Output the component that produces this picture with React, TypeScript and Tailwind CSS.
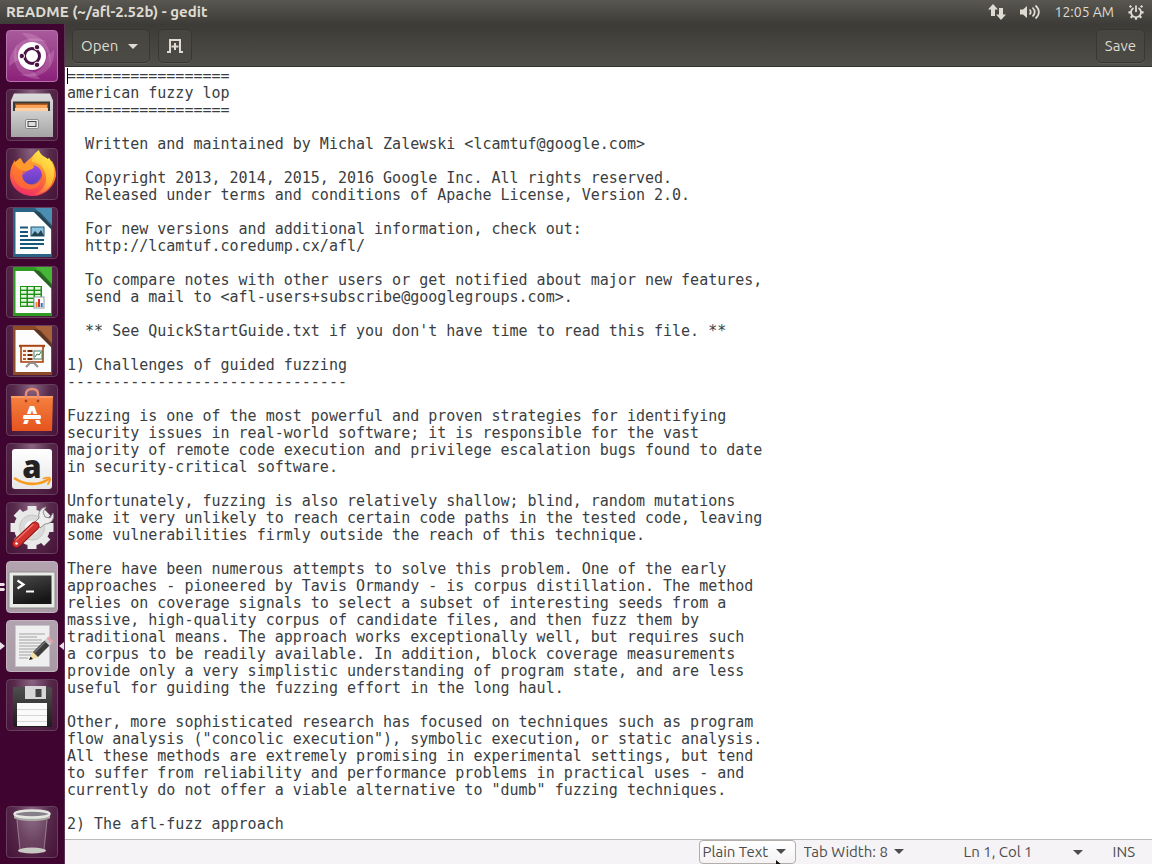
import type { ReactNode } from 'react';

const README = `==================
american fuzzy lop
==================

  Written and maintained by Michal Zalewski <lcamtuf@google.com>

  Copyright 2013, 2014, 2015, 2016 Google Inc. All rights reserved.
  Released under terms and conditions of Apache License, Version 2.0.

  For new versions and additional information, check out:
  http://lcamtuf.coredump.cx/afl/

  To compare notes with other users or get notified about major new features,
  send a mail to <afl-users+subscribe@googlegroups.com>.

  ** See QuickStartGuide.txt if you don't have time to read this file. **

1) Challenges of guided fuzzing
-------------------------------

Fuzzing is one of the most powerful and proven strategies for identifying
security issues in real-world software; it is responsible for the vast
majority of remote code execution and privilege escalation bugs found to date
in security-critical software.

Unfortunately, fuzzing is also relatively shallow; blind, random mutations
make it very unlikely to reach certain code paths in the tested code, leaving
some vulnerabilities firmly outside the reach of this technique.

There have been numerous attempts to solve this problem. One of the early
approaches - pioneered by Tavis Ormandy - is corpus distillation. The method
relies on coverage signals to select a subset of interesting seeds from a
massive, high-quality corpus of candidate files, and then fuzz them by
traditional means. The approach works exceptionally well, but requires such
a corpus to be readily available. In addition, block coverage measurements
provide only a very simplistic understanding of program state, and are less
useful for guiding the fuzzing effort in the long haul.

Other, more sophisticated research has focused on techniques such as program
flow analysis ("concolic execution"), symbolic execution, or static analysis.
All these methods are extremely promising in experimental settings, but tend
to suffer from reliability and performance problems in practical uses - and
currently do not offer a viable alternative to "dumb" fuzzing techniques.

2) The afl-fuzz approach
`;

/* ---------- launcher icons, all drawn on a 52x52 tile ---------- */

function UbuntuIcon() {
  return (
    <>
      <g fill="#f0c4ea" fillOpacity="0.22">
        <path d="M3 36C4 12 24 2 42 12 26 8 12 16 12 30z" />
        <path d="M16 3C36 2 50 20 43 40 46 24 38 12 24 11z" />
        <path d="M48 20C50 40 32 52 12 44 28 47 40 38 41 26z" />
        <path d="M34 49C14 50 2 32 11 14 8 30 16 40 28 42z" />
      </g>
      <circle cx="26" cy="26" r="14" fill="#fff" />
      <circle cx="26" cy="26" r="7.5" fill="none" stroke="#4a1244" strokeWidth="3" />
      <g fill="#4a1244" stroke="#fff" strokeWidth="1">
        <circle cx="15.8" cy="26" r="2.7" />
        <circle cx="31" cy="17.2" r="2.7" />
        <circle cx="31" cy="34.8" r="2.7" />
      </g>
    </>
  );
}

function FilesIcon() {
  return (
    <>
      <path d="M8 4.5h36l3 7v36H5v-36z" fill="url(#silver)" />
      <path d="M7 12.5h37v10H7z" fill="#3c3a38" />
      <path d="M9 14.5h33v8H9z" fill="#b65a1c" />
      <path d="M10 16h31v6H10z" fill="#f7a35c" />
      <path d="M9 19h33v4H9z" fill="#fbd0a4" />
      <path d="M5 22h42v26H5z" fill="url(#drawer)" />
      <rect x="19.5" y="30.5" width="13" height="9" rx="1.5" fill="#efefef" stroke="#8b8b8b" />
      <rect x="22" y="32.5" width="8" height="5" fill="#ddd" stroke="#444" />
    </>
  );
}

function FirefoxIcon() {
  return (
    <>
      <path
        d="M31 4c0 3-1 5-3 7 4 1 8 2 10 5l8-3c3 5 4 10 4 15-2 12-12 20-23 20C14 48 4 39 4 27c0-6 2-11 5-15v4l5-5c2 1 2 3 4 5z"
        fill="url(#fox)"
      />
      <path d="M33 2c1 5 5 6 9 9 0 0 1-2 1-1 3 4 6 10 5 17-1 11-9 19-20 20 8-4 13-11 12-18-1-8-5-14-14-15 0-5 2-9 7-12z" fill="url(#tail)" />
      <circle cx="26" cy="27" r="10" fill="url(#globe)" />
      <path d="M9 13c0 1 0 2 1 3l4-5c2 1 2 3 4 5 4 0 7 1 9 3 0 2-3 3-6 4-2 3-4 3-5 5 1 6 6 9 11 8 4-1 7-4 8-8 1 10-7 15-15 13C11 39 7 32 7 24c0-5 1-8 2-11z" fill="#ff7a2c" fillOpacity="0.6" />
      <path d="M8 15l6-5c2 1 2 4 4 6 4-1 8 0 10 2 0 3-3 3-7 5-4 0-10-1-13-8z" fill="#ff9a2b" />
    </>
  );
}

function DocIcon({ color, fold, children }: { color: string; fold: string; children: ReactNode }) {
  return (
    <>
      <path d="M7 1h39v49H7z" fill={color} />
      <path d="M9.5 5H28l17 17v25H9.5z" fill="#fdfdfd" />
      <path d="M29 1h17v19z" fill={fold} />
      <path d="M27 4l7 1 12 13v5z" fill="#1d1d1d" fillOpacity="0.45" />
      {children}
    </>
  );
}

function WriterIcon() {
  return (
    <DocIcon color="#2a6384" fold="#4a8fb3">
      <path d="M14 20.5h8M14 25h8M14 29h8M14 33h24M14 37h24M14 41h18" stroke="#155877" strokeWidth="2" />
      <rect x="25" y="20" width="13" height="9" fill="#8fc3dd" stroke="#155877" />
      <path d="M25 29l4-5 3 3 3-4 3 6z" fill="#24454f" />
    </DocIcon>
  );
}

function CalcIcon() {
  return (
    <DocIcon color="#2f9a24" fold="#45b636">
      <rect x="14" y="20" width="22" height="21" fill="#1d9213" />
      <g fill="#e7f7e3">
        {[21, 25, 29, 33, 37].map((y) => (
          <g key={y}>
            <rect x="15" y={y} width="5.5" height="2.6" />
            <rect x="22" y={y} width="5.5" height="2.6" />
            <rect x="29" y={y} width="5.5" height="2.6" />
          </g>
        ))}
      </g>
      <rect x="28" y="31" width="10" height="11" fill="#fff" stroke="#8b9aa5" />
      <path d="M30.5 41v-5" stroke="#ef8b2f" strokeWidth="2" />
      <path d="M33 41v-8" stroke="#cf2e2e" strokeWidth="2" />
      <path d="M35.7 41v-4" stroke="#2d76b5" strokeWidth="2" />
    </DocIcon>
  );
}

function ImpressIcon() {
  return (
    <DocIcon color="#8f4a26" fold="#a8623a">
      <path d="M13 21h26" stroke="#a94612" strokeWidth="2.4" />
      <rect x="15" y="21" width="22" height="16" fill="#fdf4ee" stroke="#a94612" strokeWidth="1.6" />
      <path d="M17 26h3M17 30h3M17 34h3" stroke="#c3571d" strokeWidth="2" />
      <path d="M21.5 26h5M21.5 30h5M21.5 34h5" stroke="#6d2c0c" strokeWidth="2" />
      <rect x="28" y="26" width="8" height="8" fill="#fff" stroke="#40806a" />
      <path d="M29 32l2-3 2 1 2-3" fill="none" stroke="#2c7a3e" />
      <path d="M20 42l4-4h4l4 4" fill="none" stroke="#8e8e8e" strokeWidth="2" />
    </DocIcon>
  );
}

function SoftwareIcon() {
  return (
    <>
      <path d="M5 12h42l-1 35H6z" fill="url(#bag)" />
      <path d="M5 12h42v2H5z" fill="#fb9a63" />
      <path d="M20 18v-8c0-3 2-5 6-5s6 2 6 5v8" fill="none" stroke="#e98d72" strokeWidth="2.4" />
      <circle cx="20" cy="17" r="1.4" fill="#b23c12" />
      <circle cx="32" cy="17" r="1.4" fill="#b23c12" />
      <text x="26" y="40" textAnchor="middle" fontFamily="Lato" fontWeight="800" fontSize="24" fill="#fff">A</text>
      <path d="M15.5 33h20" stroke="#ed6a30" strokeWidth="6" />
      <rect x="17" y="31" width="18" height="4" rx="1.5" fill="#fff" />
    </>
  );
}

function AmazonIcon() {
  return (
    <>
      <rect x="6" y="6" width="40" height="40" rx="3" fill="url(#paper)" />
      <text x="26" y="35" textAnchor="middle" fontFamily="Open Sans" fontWeight="800" fontSize="31" fill="#222">a</text>
      <path d="M9 35.5c10 7 24 7 33 1" fill="none" stroke="#f79a1e" strokeWidth="2.6" strokeLinecap="round" />
      <path d="M37.5 35.5c3-1 6-1 6.500-.3.4.8-.6 3.800-2 5.800" fill="none" stroke="#f79a1e" strokeWidth="1.800" strokeLinecap="round" />
    </>
  );
}

function SettingsIcon() {
  return (
    <>
      <g stroke="#e9e9e9" strokeWidth="9">
        <path d="M26 4v43M4.5 25.5h43M10.8 10.3l30.4 30.4M41.2 10.3L10.8 40.7" />
      </g>
      <circle cx="26" cy="25.5" r="18" fill="#e9e9e9" />
      <circle cx="26" cy="25.5" r="12.500" fill="#dadada" stroke="#c6c6c6" />
      <circle cx="26" cy="25.5" r="7" fill="#f3f3f3" />
      <path
        d="M29 20l4-4c-1-5 1-10 7-11l-3 5 2 5 5 1 3-5c2 6-2 11-8 11l-5 4z"
        fill="#eee"
        stroke="#8f8f8f"
        strokeWidth="1"
      />
      <path d="M10.5 41.5L29 24" stroke="#8e100f" strokeWidth="9" strokeLinecap="round" />
      <path d="M10.5 41.5L29 24" stroke="#d03330" strokeWidth="7" strokeLinecap="round" />
      <path d="M10 38.5L27 22.5" stroke="#f2706a" strokeWidth="1.5" strokeLinecap="round" />
      <circle cx="10.5" cy="41.5" r="1.3" fill="#fff" />
    </>
  );
}

function TerminalIcon() {
  return (
    <>
      <rect x="3" y="11" width="46" height="36" rx="1" fill="#e9ebe8" stroke="#8c8c8c" />
      <rect x="7" y="14.5" width="38.5" height="28.5" fill="url(#screen)" />
      <path d="M11.5 19.5l6 4-6 4" fill="none" stroke="#fff" strokeWidth="2.2" />
      <path d="M20 30.5h8" stroke="#fff" strokeWidth="2" />
    </>
  );
}

function GeditIcon() {
  return (
    <>
      <path d="M9.5 5.5h34v41h-34z" fill="#efefef" stroke="#c9c9c9" />
      <path
        d="M13 14h26M13 17h18M13 20h23M13 23h25M13 26h22M13 29h20M13 32h15M13 35h12M13 38h9"
        stroke="#a3a3a3"
        strokeWidth="1"
      />
      <path d="M23 40l4-9 6 6z" fill="#f2dfa2" />
      <path d="M23 40l1.5-3.5 2.500 2.500z" fill="#111" />
      <path d="M29.5 34.5L41 23" stroke="#3d3d3d" strokeWidth="7" />
      <path d="M28.5 32.500L39.5 21.5" stroke="#777" strokeWidth="1.5" />
      <path d="M41 23l2-2" stroke="#ccc" strokeWidth="7" />
      <path d="M43 21l2-2" stroke="#e7a0ad" strokeWidth="7" />
    </>
  );
}

function FloppyIcon() {
  return (
    <>
      <path d="M7 8h37l2 2v38H9l-2-2z" fill="url(#floppy)" />
      <rect x="19" y="7" width="21" height="13" fill="#d7d7d7" />
      <rect x="29.5" y="10" width="6" height="8" fill="#444" />
      <rect x="11" y="24" width="30" height="23" fill="#fafafa" />
      <path d="M11 30.5h30M11 36.5h30M11 42.5h30" stroke="#d6d6d6" />
    </>
  );
}

function TrashIcon() {
  return (
    <>
      <path d="M10 10h32l-4 35c-5 3-19 3-24 0z" fill="#fff" fillOpacity="0.12" />
      <path d="M11 14l3 30M41 14l-3 30" stroke="#ddd" strokeOpacity="0.4" />
      <ellipse cx="26" cy="44.5" rx="14" ry="3" fill="#c9c9c4" />
      <path d="M8 8v4c4 4 32 4 36 0V8z" fill="#a9aaa6" />
      <ellipse cx="26" cy="8" rx="17.500" ry="3.500" fill="#85808a" stroke="#e6e6e2" strokeWidth="2.4" />
    </>
  );
}

function SharedGradients() {
  return (
    <svg className="absolute size-0" aria-hidden="true">
      <defs>
        <linearGradient id="silver" x2="0" y2="1">
          <stop stopColor="#dcdcdc" />
          <stop offset="1" stopColor="#aaa" />
        </linearGradient>
        <linearGradient id="drawer" x2="0" y2="1">
          <stop stopColor="#cfcfcf" />
          <stop offset="1" stopColor="#a4a4a4" />
        </linearGradient>
        <linearGradient id="fox" x1="0.7" x2="0.4" y2="1">
          <stop stopColor="#ffc83a" />
          <stop offset="0.5" stopColor="#ff7a2f" />
          <stop offset="1" stopColor="#f02f66" />
        </linearGradient>
        <linearGradient id="tail" x1="0.7" x2="0.3" y2="1">
          <stop stopColor="#fff04f" />
          <stop offset="0.6" stopColor="#ffb634" />
          <stop offset="1" stopColor="#ff5a45" />
        </linearGradient>
        <linearGradient id="globe" x2="0" y2="1">
          <stop stopColor="#9a4be0" />
          <stop offset="1" stopColor="#5a3fc0" />
        </linearGradient>
        <linearGradient id="bag" x2="0" y2="1">
          <stop stopColor="#f4813f" />
          <stop offset="1" stopColor="#e6531f" />
        </linearGradient>
        <linearGradient id="paper" x2="0" y2="1">
          <stop stopColor="#fff" />
          <stop offset="1" stopColor="#e6e6e6" />
        </linearGradient>
        <linearGradient id="screen" x2="0.4" y2="1">
          <stop stopColor="#4b4b4b" />
          <stop offset="1" stopColor="#161616" />
        </linearGradient>
        <linearGradient id="floppy" x2="0" y2="1">
          <stop stopColor="#4f4f4f" />
          <stop offset="1" stopColor="#1c1c1c" />
        </linearGradient>
      </defs>
    </svg>
  );
}

const dark = 'bg-radial-[at_50%_0%] from-[#8a6582] via-[#572a4b] to-[#461239] border-[#66405d]';
const light = 'bg-linear-to-b from-[#b3a3b0] to-[#a89ba5] border-[#c2b3be]';

const apps = [
  { name: 'Search your computer', tile: 'bg-linear-to-b from-[#a85a9c] to-[#8c1f7a] border-[#b873ad]', icon: <UbuntuIcon /> },
  { name: 'Files', tile: dark, icon: <FilesIcon /> },
  { name: 'Firefox', tile: dark, icon: <FirefoxIcon /> },
  { name: 'LibreOffice Writer', tile: dark, icon: <WriterIcon /> },
  { name: 'LibreOffice Calc', tile: dark, icon: <CalcIcon /> },
  { name: 'LibreOffice Impress', tile: dark, icon: <ImpressIcon /> },
  { name: 'Ubuntu Software', tile: dark, icon: <SoftwareIcon /> },
  { name: 'Amazon', tile: dark, icon: <AmazonIcon /> },
  { name: 'System Settings', tile: dark, icon: <SettingsIcon /> },
  { name: 'Terminal', tile: light, icon: <TerminalIcon />, mark: 'running' },
  { name: 'Text Editor', tile: light, icon: <GeditIcon />, mark: 'focused' },
  { name: 'Floppy Disk', tile: dark, icon: <FloppyIcon /> },
];

function LauncherItem({ name, tile, icon, mark }: { name: string; tile: string; icon: ReactNode; mark?: string }) {
  return (
    <button aria-label={name} className="relative flex w-full shrink-0 justify-center">
      <span className={`block size-[52px] rounded-[4px] border ${tile}`}>
        <svg viewBox="1 1 50 50" className="size-full overflow-visible">{icon}</svg>
      </span>
      {mark === 'running' && (
        <svg viewBox="0 0 5 8" className="absolute top-[22px] left-0 h-2 w-[5px]" fill="#eadfe7">
          <path d="M0 0h4l1 1.5-1 1.5H0zM0 5h4l1 1.5-1 1.5H0z" />
        </svg>
      )}
      {mark === 'focused' && (
        <>
          <svg viewBox="0 0 5 8" className="absolute top-[22px] left-0 h-2 w-[5px]" fill="#eadfe7">
            <path d="M0 0l5 4-5 4z" />
          </svg>
          <svg viewBox="0 0 5 8" className="absolute top-[22px] right-0 h-2 w-[5px]" fill="#eadfe7">
            <path d="M5 0L0 4l5 4z" />
          </svg>
        </>
      )}
    </button>
  );
}

function Launcher() {
  return (
    <nav aria-label="Launcher" className="flex w-[65px] shrink-0 flex-col justify-between border-r border-[#5c3353] bg-[#3f0430] py-[6px]">
      <div className="flex flex-col gap-[7px]">
        {apps.map((app) => (
          <LauncherItem key={app.name} {...app} />
        ))}
      </div>
      <LauncherItem name="Trash" tile={dark} icon={<TrashIcon />} />
    </nav>
  );
}

function Triangle({ className = '' }: { className?: string }) {
  return (
    <svg viewBox="0 0 10 5" className={`h-[5px] w-[10px] ${className}`} fill="currentColor" aria-hidden="true">
      <path d="M0 0h10L5 5z" />
    </svg>
  );
}

function TopPanel() {
  return (
    <header className="flex h-6 shrink-0 items-center justify-between bg-linear-to-b from-[#595750] to-[#3d3c38] pr-2 pl-[6px] text-[#dfdbd2]">
      <h1 className="text-[15px] font-bold">README (~/afl-2.52b) - gedit</h1>
      <div className="flex items-center gap-[14px]">
        <svg viewBox="0 0 18 16" className="h-4 w-[18px]" fill="currentColor" role="img" aria-label="Network">
          <path d="M5 0l5 5.5H7V12H3V5.5H0zM13 16l-5-5.5h3V4h4v6.5h3z" />
        </svg>
        <svg viewBox="0 0 21 16" className="h-4 w-[21px]" role="img" aria-label="Volume">
          <path d="M0 5.5h3L7 2v12L3 10.500H0z" fill="currentColor" />
          <path d="M9.5 5.5c1.5 1.5 1.5 3.5 0 5M12.5 3.5c3 3 3 6 0 9M15.5 1.5c4.5 4 4.5 9 0 13" fill="none" stroke="currentColor" strokeWidth="1.7" />
        </svg>
        <time className="text-[14px]">12:05 AM</time>
        <svg viewBox="0 0 16 16" className="size-4" fill="none" stroke="currentColor" role="img" aria-label="Session">
          <path d="M5.5 4a5 5 0 1 0 5 0M8 1.5V8" strokeWidth="1.8" />
          <path d="M3.2 3.2L1.7 1.7M12.8 3.2l1.5-1.5M3 8.3H.4M13 8.3h2.600M4.5 12l-1.8 1.8M11.5 12l1.8 1.8M8 13.3v2.500" strokeWidth="2.200" />
        </svg>
      </div>
    </header>
  );
}

const toolButton = 'flex h-[34px] items-center rounded-[5px] border border-[#383732] bg-linear-to-b from-[#464540] to-[#4b4a44] shadow-[0_1px_0_#5c5a54]';

function HeaderBar() {
  return (
    <div className="flex h-[43px] shrink-0 items-center gap-2 border-b border-[#33322e] bg-linear-to-b from-[#3c3b37] to-[#504e48] px-[7px] pt-[2px] text-[15px] text-[#dfdbd2]">
      <button className={`${toolButton} gap-[10px] pr-[11px] pl-2`}>
        Open
        <Triangle />
      </button>
      <button aria-label="Create a new document" className={`${toolButton} px-2`}>
        <svg viewBox="0 0 16 14" className="h-[14px] w-4" fill="none" stroke="currentColor" strokeWidth="2">
          <path d="M0 13h3V1h10v12h3" />
          <path d="M8 4v7M4.5 7.5h7" />
        </svg>
      </button>
      <button className={`${toolButton} ml-auto px-2`}>Save</button>
    </div>
  );
}

function StatusBar() {
  return (
    <footer className="flex h-[25px] shrink-0 items-center justify-end border-t border-[#bdbbb9] bg-[#f5f3f5] pr-[17px] text-[15px] text-[#4c4c4c]">
      <div className="relative mr-[6px]">
        <select aria-label="Highlight mode" className="h-6 w-[97px] appearance-none rounded-[4px] border border-[#b3aeaa] bg-linear-to-b from-white to-[#f4f2f2] pl-[3px]">
          <option>Plain Text</option>
        </select>
        <Triangle className="pointer-events-none absolute top-[9px] right-[10px]" />
        <svg viewBox="0 0 8 6" className="pointer-events-none absolute top-[20px] left-[77px] h-[6px] w-2">
          <path d="M0 0l7 6H0z" fill="#111" />
        </svg>
      </div>
      <div className="relative mr-[60px]">
        <select aria-label="Tab width" className="h-6 w-[102px] appearance-none pl-[2px]">
          <option>Tab Width: 8</option>
        </select>
        <Triangle className="pointer-events-none absolute top-[9px] right-0" />
      </div>
      <button className="mr-[30px] flex w-[119px] items-center justify-between">
        Ln 1, Col 1
        <Triangle />
      </button>
      <span>INS</span>
    </footer>
  );
}

export default function App() {
  return (
    <div className="flex h-screen flex-col overflow-hidden bg-white font-['Ubuntu','Noto_Sans',sans-serif]">
      <SharedGradients />
      <TopPanel />
      <div className="flex min-h-0 flex-1">
        <Launcher />
        <main className="flex min-w-0 flex-1 flex-col">
          <HeaderBar />
          <div className="relative flex min-h-0 flex-1">
            <textarea
              aria-label="README"
              spellCheck={false}
              wrap="off"
              defaultValue={README}
              className="flex-1 resize-none overflow-hidden bg-white pt-px pl-[2px] font-['DejaVu_Sans_Mono',monospace] text-[15px] leading-[17px] text-[#3a3e42] outline-none"
            />
            <span className="absolute top-px left-[2px] h-4 w-px bg-black" />
          </div>
          <StatusBar />
        </main>
      </div>
    </div>
  );
}
